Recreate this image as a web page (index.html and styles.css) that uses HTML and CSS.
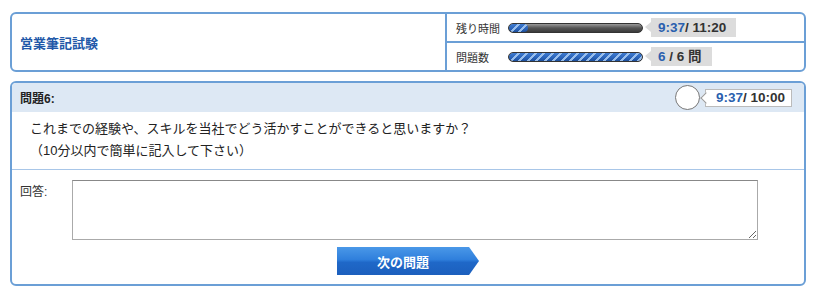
FILE: index.html
```html
<!DOCTYPE html>
<html lang="ja">
<head>
  <meta charset="UTF-8" />
  <meta name="viewport" content="width=device-width, initial-scale=1.0"/>
  <title>営業筆記試験</title>
  <link rel="stylesheet" href="styles.css">
</head>
<body>
  <div class="exam-head">
    <div class="exam-title">営業筆記試験</div>
    <div class="exam-status">
      <div class="status-row">
        <span class="status-label">残り時間</span>
        <div class="bar"><div class="bar-fill" style="width: 14%"></div></div>
        <div class="tag"><span class="now">9:37</span>/ 11:20</div>
      </div>
      <div class="status-row">
        <span class="status-label">問題数</span>
        <div class="bar"><div class="bar-fill" style="width: 100%"></div></div>
        <div class="tag"><span class="now">6</span> / 6 問</div>
      </div>
    </div>
  </div>

  <div class="question">
    <div class="question-head">
      <span class="question-no">問題6:</span>
      <div class="timer">
        <div class="clock"></div>
        <div class="timer-tag"><span class="now">9:37</span>/ 10:00</div>
      </div>
    </div>
    <div class="question-text">
      これまでの経験や、スキルを当社でどう活かすことができると思いますか？<br>
      （10分以内で簡単に記入して下さい）
    </div>
    <div class="answer">
      <div class="answer-row">
        <label for="answer">回答:</label>
        <textarea id="answer"></textarea>
      </div>
      <button class="next">次の問題</button>
    </div>
  </div>
</body>
</html>
```

FILE: styles.css
```css
* {
  box-sizing: border-box;
  font-family: "Liberation Sans", "Noto Sans CJK JP", sans-serif;
}
body {
  margin: 0;
  padding: 12px 20px 0 10px;
  background: #fff;
  color: #222;
}
.exam-head {
  display: flex;
  height: 60px;
  border: 2px solid #6b9fd6;
  border-radius: 6px;
}
.exam-title {
  width: 435px;
  display: flex;
  align-items: center;
  padding-left: 8px;
  font-size: 13px;
  font-weight: bold;
  color: #2158a8;
  border-right: 2px solid #6b9fd6;
}
.exam-status { flex: 1; display: flex; flex-direction: column; }
.status-row {
  flex: 1;
  display: flex;
  align-items: center;
  padding-left: 9px;
}
.status-row + .status-row { border-top: 2px solid #6b9fd6; }
.status-label { width: 52px; font-size: 11px; color: #333; }
.bar {
  width: 135px;
  height: 10px;
  border-radius: 5px;
  border: 1px solid #333;
  background: linear-gradient(#9a9a9a, #555 50%, #3a3a3a);
  overflow: hidden;
}
.bar-fill {
  height: 100%;
  border-radius: 5px;
  background:
    repeating-linear-gradient(135deg, rgba(170,205,245,0.85) 0 2px, transparent 2px 6px),
    linear-gradient(#3d7ad0, #2a63b8 60%, #1d4f9c);
}
.tag {
  position: relative;
  margin-left: 8px;
  height: 19px;
  line-height: 19px;
  padding: 0 10px 0 7px;
  background: #dcdcdc;
  font-size: 13.5px;
  font-weight: bold;
  color: #333;
  white-space: pre;
}
.tag::before {
  content: "";
  position: absolute;
  left: -6px;
  top: 4px;
  border-style: solid;
  border-width: 5px 6px 5px 0;
  border-color: transparent #dcdcdc transparent transparent;
}
.now { color: #2a5fae; }

.question {
  margin-top: 9px;
  border: 2px solid #6b9fd6;
  border-radius: 6px;
  overflow: hidden;
}
.question-head {
  display: flex;
  align-items: center;
  justify-content: space-between;
  height: 29px;
  padding: 0 12px 0 8px;
  background: #dde8f4;
}
.question-no { font-size: 12px; font-weight: bold; color: #222; }
.timer { display: flex; align-items: center; }
.clock {
  width: 25px;
  height: 25px;
  border-radius: 50%;
  border: 1px solid #777;
  background: #fff;
}
.timer-tag {
  position: relative;
  margin-left: 5px;
  height: 18px;
  line-height: 16px;
  padding: 0 6px 0 10px;
  background: #fff;
  border: 1px solid #bbb;
  font-size: 13.5px;
  font-weight: bold;
  color: #333;
}
.timer-tag::before {
  content: "";
  position: absolute;
  left: -4px;
  top: 4px;
  width: 7px;
  height: 7px;
  background: #fff;
  border-left: 1px solid #999;
  border-bottom: 1px solid #999;
  transform: rotate(45deg);
}
.question-text {
  padding: 6px 18px 7px;
  font-size: 13px;
  line-height: 22px;
  color: #222;
  border-bottom: 1px solid #a8c6e8;
}
.answer {
  padding: 10px 8px 9px;
  display: flex;
  flex-direction: column;
  align-items: center;
}
.answer-row { display: flex; align-self: stretch; }
.answer-row label {
  width: 52px;
  font-size: 12px;
  color: #333;
  padding-top: 2px;
}
textarea {
  width: 686px;
  height: 60px;
  border: 1px solid #aaa;
  border-top-color: #888;
  resize: both;
}
.next {
  margin-top: 7px;
  width: 142px;
  height: 28px;
  border: none;
  padding: 0 10px 0 0;
  background: linear-gradient(#4a98e8, #2f7fdc 45%, #1f68c8 55%, #1c5fbd);
  clip-path: polygon(0 0, 93% 0, 100% 50%, 93% 100%, 0 100%);
  color: #fff;
  font-size: 13px;
  font-weight: bold;
  cursor: pointer;
}
```
